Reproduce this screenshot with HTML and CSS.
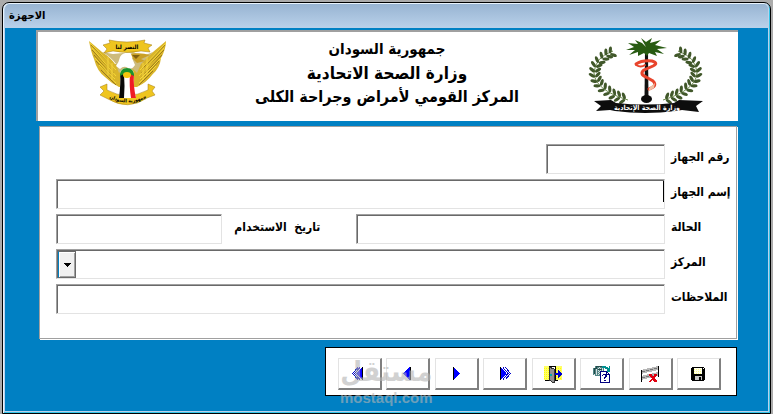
FILE: index.html
```html
<!DOCTYPE html>
<html lang="ar">
<head>
<meta charset="utf-8">
<title>الاجهزة</title>
<link rel="stylesheet" href="styles.css">
</head>
<body>
<div class="window">
  <h1 class="titlebar"><span dir="rtl">الاجهزة</span></h1>
  <main class="client">
    <header class="banner">
      <svg class="eagle" viewBox="0 0 90 72" aria-hidden="true">
        <path d="M6 4Q8 15 11 22Q14 34 22 40Q28 46 36 50L54 50Q64 45 69 38Q77 31 78 21Q83 12 83 4L70 15Q62 21 57 27H32Q27 20 19 15Z" fill="#d9b52a"/>
        <path d="M19 15Q28 20 33 27L36 36L40 32L50 32L54 36L58 27L70 15L60 19L50 15L30 17Z" fill="#cdbb7c"/>
        <g fill="none" stroke="#9b7a1c" stroke-width="1">
          <path d="M8 8L32 32M9 13L31 36M11 18L31 41M13 24L32 45M18 33L33 48M82 8L59 32M81 13L58 36M79 18L58 41M76 24L57 45M70 34L56 48"/>
          <path d="M25 20V38M29 26V43M64 20V38M60 26V43" stroke="#f5d342"/>
        </g>
        <g fill="none" stroke="#f7d935" stroke-width="1">
          <path d="M7 6L33 33M9 11L33 39M12 21L32 42M16 28L33 46M83 6L57 33M81 11L56 39M78 21L57 42M73 29L56 46"/>
        </g>
        <path d="M33 29Q36 25 37 20Q40 15 47 16L53 19L49 21L52 28Q49 33 45 31Q41 28 37 32Z" fill="#fff"/>
        <path d="M48 17Q57 15 67 18L58 22L62 24L54 26L50 22Z" fill="#caa026"/>
        <path d="M49 18L57 18L53 22Z" fill="#806010"/>
        <path d="M20 8L27 6L26 3Q44 7 62 3L61 6L69 8L65 11L67 15L58 14Q44 17 30 14L21 16L24 12Z" fill="#efc51f" stroke="#a17b12" stroke-width=".5"/>
        <text x="44" y="12" class="motto">النصر لنا</text>
        <path d="M17 50L24 47L24 53Q44 64 65 53L65 47L72 50L69 54L72 58L64 61Q45 74 25 62L17 58L21 54Z" fill="#efc51f" stroke="#a17b12" stroke-width=".5"/>
        <path d="M36 61Q38 45 37 38Q37 31 44 31Q51 31 51 38Q50 48 53 61Z" fill="#fff"/>
        <path d="M36 61Q38 45 37 37L41 37Q42 48 41 61Z" fill="#080808"/>
        <path d="M47 37H51Q50 48 53 61H48Q46 48 47 37Z" fill="#ef1c24"/>
        <path d="M37 39Q37 31 44 31Q51 31 51 39Q44 34 37 39Z" fill="#1b922b"/>
        <ellipse cx="44" cy="38" rx="4" ry="3" fill="#f5c50d"/>
        <path id="scroll" d="M23 59Q44 72 67 59" fill="none"/>
        <text class="scroll-text"><textPath href="#scroll" startOffset="50%">جمهورية السودان</textPath></text>
      </svg>
      <div class="heading" dir="rtl">
        <p class="state">جمهورية السودان</p>
        <p class="ministry">وزارة الصحة الاتحادية</p>
        <p>المركز القومي لأمراض وجراحة الكلى</p>
      </div>
      <svg class="health" viewBox="0 0 125 80" aria-hidden="true">
        <defs>
          <g id="leaf">
            <ellipse cx="3" cy="-1" rx="3.500" ry="1.600" transform="rotate(38)"/>
            <ellipse cx="-3" cy="-1" rx="3.500" ry="1.600" transform="rotate(-38)"/>
          </g>
          <g id="wreath">
            <path d="M30 14Q12 20 11 36Q12 53 45 63" fill="none" stroke="#6f8e4f" stroke-width="1"/>
            <g fill="#41582a">
              <use href="#leaf" transform="translate(28 16) rotate(238)"/>
              <use href="#leaf" transform="translate(24 18) rotate(230)"/>
              <use href="#leaf" transform="translate(20 21) rotate(220)"/>
              <use href="#leaf" transform="translate(16 25) rotate(210)"/>
              <use href="#leaf" transform="translate(13 29) rotate(197)"/>
              <use href="#leaf" transform="translate(12 34) rotate(184)"/>
              <use href="#leaf" transform="translate(12 39) rotate(172)"/>
              <use href="#leaf" transform="translate(14 44) rotate(158)"/>
              <use href="#leaf" transform="translate(17 48) rotate(145)"/>
              <use href="#leaf" transform="translate(21 52) rotate(133)"/>
              <use href="#leaf" transform="translate(26 55) rotate(123)"/>
              <use href="#leaf" transform="translate(31 58) rotate(115)"/>
              <use href="#leaf" transform="translate(36 60) rotate(110)"/>
              <use href="#leaf" transform="translate(41 62) rotate(107)"/>
            </g>
          </g>
        </defs>
        <use href="#wreath"/>
        <use href="#wreath" transform="matrix(-1 0 0 1 125 0)"/>
        <path d="M62 15H65L65.500 62H61.500Z" fill="#111"/>
        <path d="M63 10L58 1L63 5L69 1L67 6L78 3L72 8L84 11L74 12L81 17L72 15L74 19L66 16L64 19L61 16L55 19L55 15L46 18L52 13L43 13L51 10L45 6L55 7L52 3L59 6Z" fill="#285b12"/>
        <g fill="none" stroke="#e8442c" stroke-linecap="round">
          <path d="M53 27Q59 23 69 24Q76 26 70 29L61 33Q56 37 63 40L70 44Q75 49 66 52" stroke-width="3"/>
          <path d="M53 28Q58 31 62 28" stroke-width="2"/>
        </g>
        <path d="M66 51L72 46L71 51L66 54Z" fill="#efc0a5"/>
        <ellipse cx="63.500" cy="62" rx="5.500" ry="4" fill="#0a0a0a"/>
        <path d="M11 64L28 63L33 66Q62 69 91 66L96 63L120 64L113 69L116 75L99 73L93 74Q62 78 32 74L27 73L13 74L18 69Z" fill="#0d0d0d"/>
        <text x="64" y="73" class="ribbon-text">وزارة الصحة الإتحادية</text>
      </svg>
    </header>

    <form class="record" id="record" dir="rtl">
      <div class="row short">
        <label for="number">رقم الجهاز</label>
        <input id="number" type="text">
      </div>
      <div class="row">
        <label for="name">إسم الجهاز</label>
        <div class="focused"><input id="name" type="text"></div>
      </div>
      <div class="row split">
        <label for="state">الحالة</label>
        <input id="state" type="text">
        <label class="date-label" for="date">تاريخ&nbsp; الاستخدام</label>
        <input id="date" type="text">
      </div>
      <div class="row">
        <label for="center">المركز</label>
        <div class="combo">
          <select id="center"><option></option></select>
          <span class="drop"><svg viewBox="0 0 7 4"><path d="M0 0h7v1h-1v1h-1v1h-1v1h-1v-1h-1v-1h-1v-1h-1z"/></svg></span>
        </div>
      </div>
      <div class="row">
        <label for="notes">الملاحظات</label>
        <input id="notes" type="text">
      </div>
    </form>

    <nav class="toolbar">
      <button type="button" aria-label="الأخير"><svg viewBox="0 0 16 16"><path d="M10 1v13l-6-6.500z" fill="#00f"/><path d="M10.500 1v13" stroke="#000"/><path d="M6 1.500L.5 7.500L6 13.500" fill="none" stroke="#0000c8"/><path d="M8 1.500L2.500 7.500L8 13.500" fill="none" stroke="#0000c8"/></svg></button>
      <button type="button" aria-label="التالي"><svg viewBox="0 0 16 16"><path d="M10 1v13l-7-6.500z" fill="#00f"/><path d="M10.500 1v13" stroke="#000"/></svg></button>
      <button type="button" aria-label="السابق"><svg viewBox="0 0 16 16"><path d="M6 1v13l6-6.500z" fill="#00f"/><path d="M5.500 1v13" stroke="#000"/></svg></button>
      <button type="button" aria-label="الأول"><svg viewBox="0 0 16 16"><path d="M4 1v13l5.500-6.500z" fill="#00f"/><path d="M3.500 1v13" stroke="#000"/><path d="M6 1.500L11 7.500L6 13.500M8.500 1.500L13.500 7.500L8.500 13.500" fill="none" stroke="#0000c8"/></svg></button>
      <button type="button" aria-label="خروج"><svg class="wide" viewBox="0 0 18 18">
        <path d="M0 1h18v14H0z" fill="#ff6"/><path d="M0 3h18M0 5h18M0 7h18M0 9h18M0 11h18M0 13h18" stroke="#ff0" stroke-dasharray="1 1"/>
        <path d="M5 2h7v13H5z" fill="#fff"/><path d="M11.500 2v13M5 1.500h7M1 15.500h4M11 15.500h3" stroke="#000"/>
        <path d="M5 2l5 2v14l-5-3z" fill="#929292" stroke="#333"/><path d="M6 9h2v2H6z" fill="#0aa"/>
        <path d="M11 8h3V5h1v1h1v1h1v1h1v2h-1v1h-1v1h-1v1h-1v-3h-3z" fill="#0000d0"/></svg></button>
      <button type="button" aria-label="استعلام"><svg class="wide" viewBox="0 0 18 18">
        <path d="M0 3h2V1h7v2h2v7H9v1H2v-1H0z" fill="#508585"/>
        <path d="M1 3.500h9M1 5.500h9M1 7.500h6M1 9.500h6M3 2v8M6 2v8M9 2v5" stroke="#d5dddd" stroke-dasharray="1 1"/>
        <path d="M1 3h2V1h6M1 4v5M5 4h4" fill="none" stroke="#244b4b"/>
        <path d="M9 1h4v1h2v1h1V1h1v6h-5V6h2V4h-2V3H9z" fill="#009090"/>
        <path d="M7.500 6.500h6l3 3v8h-9z" fill="#fff" stroke="#000080"/><path d="M13.500 6.500v3h3" fill="none" stroke="#000080"/>
        <path d="M9 10h1V9h3v1h1v2h-1v1h-1v1h-1v-2h1v-2h-2v1H9zM11 15h2v1h-2z" fill="#000080"/></svg></button>
      <button type="button" aria-label="حذف"><svg class="wide" viewBox="0 0 18 18">
        <path d="M0 5l17-4v4L0 9zM0 11l17-4v4L0 15z" fill="#b8b8b8"/>
        <path d="M1 7l16-4M1 13l16-4" stroke="#777" stroke-dasharray="3 1"/>
        <path d="M.5 5v12M17.500 1v11" stroke="#000"/>
        <path d="M8 9h3v2h2V9h3v2h-1v1h-1v2h1v1h1v2h-3v-1h-1v-1h-1v1h-1v1H8v-1h1v-1h1v-1h1v-1h-1v-1H9v-1H8z" fill="#e00010"/></svg></button>
      <button type="button" aria-label="حفظ"><svg viewBox="0 0 14 14">
        <path d="M1 0h12v1h1v12h-1v1H1v-1H0V1h1z" fill="#000"/><path d="M3 1h8v6H3z" fill="#fffff0"/><path d="M3 2.500h8M3 4.500h8M3 6.500h8" stroke="#ff8" stroke-dasharray="1 1"/>
        <path d="M4 9h7v4H4z" fill="#c8c8c8"/><path d="M8 10h2v3H8z" fill="#000"/><path d="M12 1h1v1h-1z" fill="#fff"/></svg></button>
      <div class="watermark"><b dir="rtl">مستقل</b><span>mostaql.com</span></div>
    </nav>
  </main>
</div>
</body>
</html>
```
FILE: styles.css
```css
* { box-sizing: border-box; }

body {
  margin: 0;
  min-height: 100vh;
  padding: 2px 2px 0;
  display: flex;
  background: #ababab;
  color: #000;
  font-family: "DejaVu Sans Condensed", "DejaVu Sans", sans-serif;
}

.window {
  flex: 1;
  display: flex;
  flex-direction: column;
  border: 1px solid #000;
  border-radius: 7px 7px 0 0;
  background: #b9d1ea;
  padding: 0 2px 2px;
  box-shadow: inset 1px 1px #e8f3fc, inset -1px -1px #35c4e8;
}

.titlebar {
  margin: 1px 0 0;
  height: 24px;
  padding: 0 4px;
  font-size: 11px;
  line-height: 24px;
  font-weight: bold;
  background: linear-gradient(#98b4d2, #b9d1ea);
  border-radius: 5px 5px 0 0;
}

.client {
  flex: 1;
  padding: 2px 30px 14px 31px;
  background: #0080c3;
  display: flex;
  flex-direction: column;
}

.banner {
  display: flex;
  justify-content: space-between;
  align-items: flex-start;
  height: 91px;
  padding: 5px 30px 0 45px;
  background: #fff;
  border: solid #a0a0a0;
  border-width: 2px 0 0 2px;
}

.eagle { width: 90px; height: 72px; }
.health { width: 125px; height: 80px; }
.heading {
  flex: 1;
  padding-left: 18px;
  text-align: center;
  font-weight: bold;
  font-size: 16px;
  line-height: 24px;
}
.heading p { margin: 0; }
.heading .state { font-size: 15px; }
.heading .ministry { font-size: 17px; }

.motto, .scroll-text, .ribbon-text {
  font-weight: bold;
  text-anchor: middle;
}
.motto { font-size: 6px; }
.scroll-text { font-size: 5px; }
.ribbon-text { font-size: 7px; fill: #fff; }

.record {
  margin: 5px 1px 1px 3px;
  padding: 17px 0 24px 16px;
  background: #fff;
  border: 1px solid #a0a0a0;
  box-shadow: 1px 1px #fff;
  display: flex;
  flex-direction: column;
  gap: 5px;
}

.row {
  display: grid;
  grid-template-columns: 65px 1fr;
  column-gap: 6px;
  align-items: center;
}
.row.short { grid-template-columns: 65px 119px; }
.row.split { grid-template-columns: 65px 308fr 122px 166fr; }
.row.split .date-label { padding-left: 6px; }

label {
  padding-bottom: 4px;
  font-size: 12px;
  font-weight: bold;
  text-align: left;
  white-space: nowrap;
}

input, select {
  display: block;
  width: 100%;
  height: 30px;
  margin: 0;
  padding: 2px 4px;
  appearance: none;
  border: 1px solid;
  border-color: #a0a0a0 #e3e3e3 #e3e3e3 #a0a0a0;
  border-radius: 0;
  background: #fff;
  box-shadow: inset 1px 1px #696969;
  outline: none;
  font-size: 12px;
}

.focused, .combo { position: relative; }
.focused::after {
  content: "";
  position: absolute;
  right: 1px;
  top: 2px;
  width: 1px;
  height: 21px;
  background: #000;
}

.drop {
  position: absolute;
  left: 2px;
  top: 2px;
  bottom: 1px;
  width: 18px;
  display: flex;
  align-items: center;
  justify-content: center;
  pointer-events: none;
  background: #f0f0f0;
  border: 1px solid #696969;
  border-left-color: #0080c3;
  box-shadow: inset 1px 1px #fff, inset -1px -1px #a0a0a0;
}
.drop svg { width: 7px; height: 4px; }

.toolbar {
  position: relative;
  align-self: flex-end;
  width: 412px;
  max-width: 100%;
  display: flex;
  justify-content: space-between;
  margin: 7px 1px 0 0;
  padding: 10px 15px 5px 12px;
  background: #fff;
  border: 1px solid #000;
}

button {
  width: 44px;
  height: 32px;
  padding: 0;
  display: flex;
  align-items: center;
  justify-content: center;
  background: #fff;
  border: solid;
  border-width: 1px 2px 2px 1px;
  border-color: #e3e3e3 #808080 #808080 #e3e3e3;
}
button svg { width: 16px; height: 16px; shape-rendering: crispEdges; }
button svg.wide { width: 18px; height: 18px; }
button:last-of-type svg { width: 14px; height: 14px; }

.watermark {
  position: absolute;
  left: 14px;
  top: 6px;
  display: flex;
  flex-direction: column;
  align-items: center;
  color: #b4b4b4;
  opacity: 0.6;
  pointer-events: none;
}
.watermark b { font-size: 28px; line-height: 36px; }
.watermark span {
  font-family: "Liberation Sans", sans-serif;
  font-size: 15px;
  line-height: 16px;
  font-weight: bold;
}
```
